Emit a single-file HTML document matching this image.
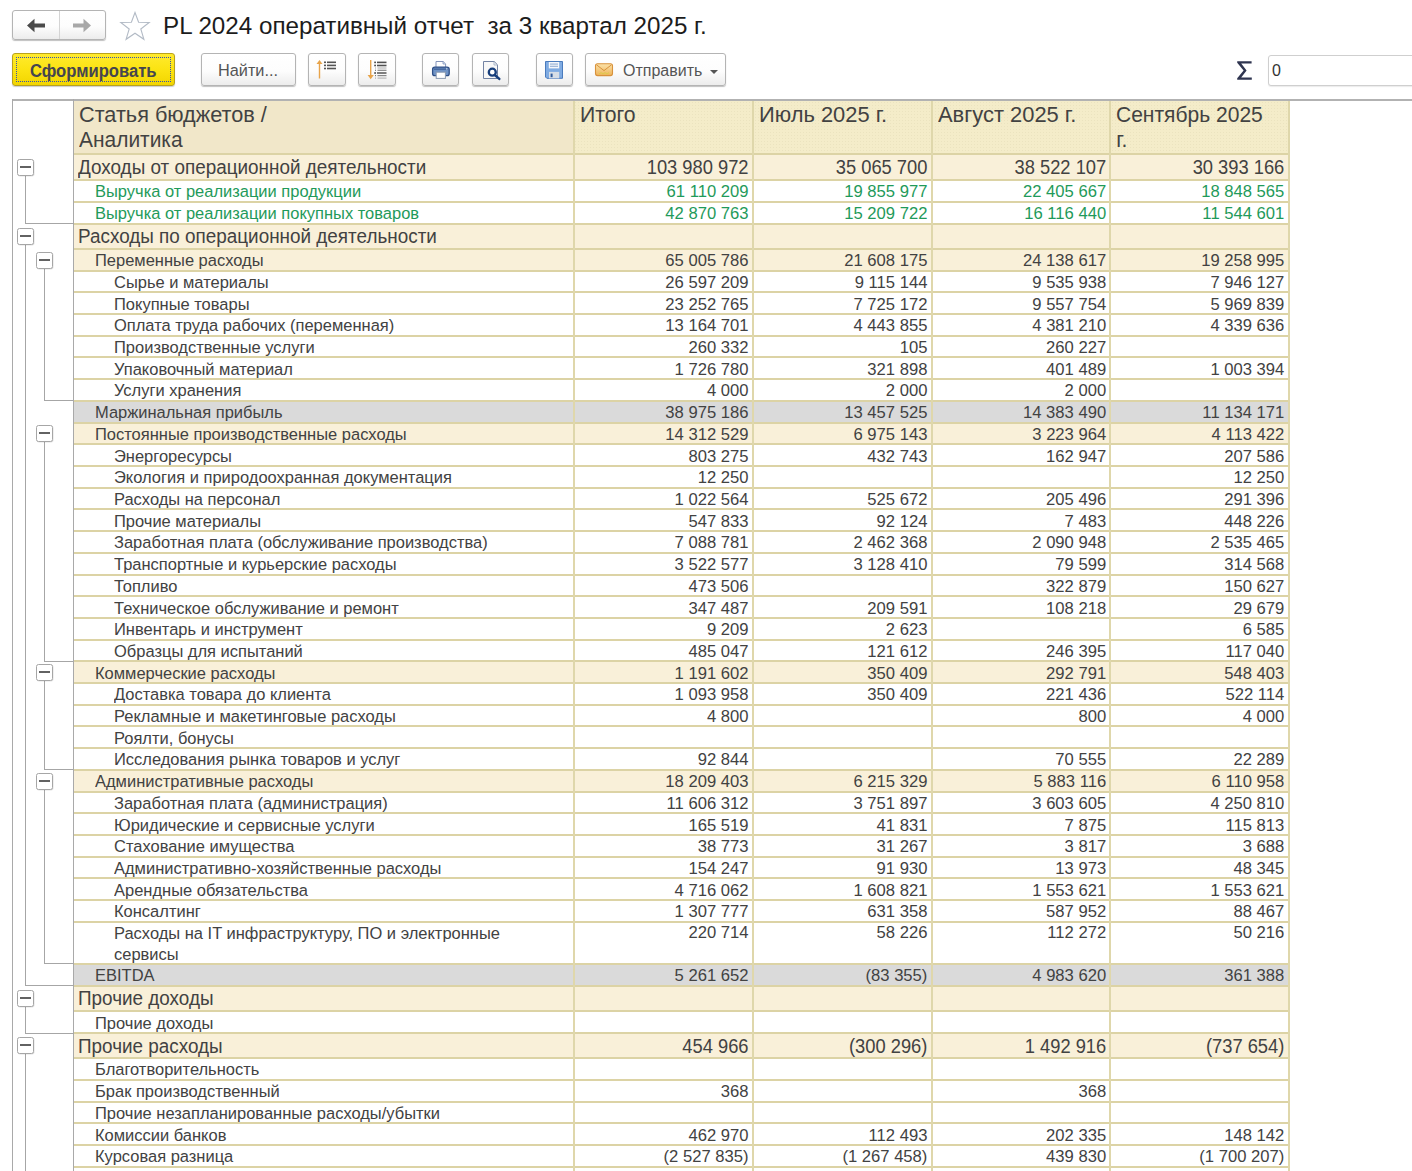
<!DOCTYPE html>
<html><head><meta charset="utf-8"><style>
*{margin:0;padding:0;box-sizing:border-box}
html,body{width:1412px;height:1171px;overflow:hidden;background:#fff}
body{position:relative;font-family:"Liberation Sans",sans-serif;color:#424242}
.a{position:absolute}
.t{position:absolute;white-space:nowrap;line-height:1}
.n{position:absolute;white-space:nowrap;line-height:1;text-align:right}
.hl{position:absolute;height:2px;background:#dcd3a5}
.vl{position:absolute;width:2px;background:#dfd7ab}
.btn{position:absolute;border:1px solid #b4b4b4;border-radius:3px;background:linear-gradient(#ffffff,#fdfdfd 55%,#ececec);box-shadow:0 1px 1px rgba(0,0,0,.25)}
.tg{position:absolute;background:#a6a6a6}
</style></head><body>

<div class="btn" style="left:12px;top:10px;width:94px;height:30px;"></div>
<div class="a" style="left:59px;top:11px;width:1px;height:28px;background:#d4d4d4"></div>
<svg class="a" style="left:26px;top:18px" width="20" height="15" viewBox="0 0 20 15"><path d="M1 7.5 L8.5 0.8 L8.5 5.6 L19 5.6 L19 9.4 L8.5 9.4 L8.5 14.2 Z" fill="#4a4a4a"/></svg>
<svg class="a" style="left:72px;top:18px" width="20" height="15" viewBox="0 0 20 15"><path d="M19 7.5 L11.5 0.8 L11.5 5.6 L1 5.6 L1 9.4 L11.5 9.4 L11.5 14.2 Z" fill="#a8a8a8"/></svg>
<svg class="a" style="left:119px;top:11px" width="32" height="30" viewBox="0 0 32 30"><path d="M16 1.5 L19.6 11.3 L30.2 11.5 L21.8 18 L24.9 28.3 L16 22.2 L7.1 28.3 L10.2 18 L1.8 11.5 L12.4 11.3 Z" fill="none" stroke="#b3bbc6" stroke-width="1.1" stroke-linejoin="miter"/></svg>
<div class="t" style="left:162.5px;top:13.8px;font-size:24.3px;color:#1c1c1c;transform:scaleX(0.9955);transform-origin:0 0">PL 2024 оперативный отчет&nbsp; за 3 квартал 2025 г.</div>
<div class="a" style="left:12px;top:53px;width:163px;height:33px;border:1px solid #b9a21a;border-radius:3px;background:linear-gradient(#ffea2e,#fbe312 50%,#f2d500);box-shadow:0 1px 1px rgba(0,0,0,.2)"></div>
<div class="a" style="left:16px;top:57px;width:155px;height:25px;border:1px dotted #3550b0"></div>
<div class="t" style="left:29.5px;top:62.5px;font-size:17.6px;font-weight:bold;color:#45454f;transform:scaleX(0.944);transform-origin:0 0">Сформировать</div>
<div class="btn" style="left:201px;top:53px;width:95px;height:33px"></div>
<div class="t" style="left:218px;top:62px;font-size:16.3px;color:#545454">Найти...</div>
<div class="btn" style="left:308px;top:53px;width:38px;height:33px"></div>
<div class="btn" style="left:358px;top:53px;width:38px;height:33px"></div>
<div class="btn" style="left:422px;top:53px;width:37px;height:33px"></div>
<div class="btn" style="left:472px;top:53px;width:37px;height:33px"></div>
<div class="btn" style="left:536px;top:53px;width:37px;height:33px"></div>
<svg class="a" style="left:314px;top:58px" width="26" height="22" viewBox="0 0 26 22"><path d="M5.5 2 L2.5 6 L4.8 6 L4.8 20.5 L6.2 20.5 L6.2 6 L8.5 6 Z" fill="#e8a44a"/><rect x="10" y="3.5" width="2" height="1.6" fill="#555"/><rect x="13" y="3.5" width="9" height="1.6" fill="#555"/><rect x="10" y="6.6" width="2" height="1.6" fill="#555"/><rect x="13" y="6.6" width="9" height="1.6" fill="#555"/><rect x="10" y="9.7" width="2" height="1.6" fill="#555"/><rect x="13" y="9.7" width="9" height="1.6" fill="#555"/></svg>
<svg class="a" style="left:364.8px;top:58px" width="26" height="24" viewBox="0 0 26 24"><path d="M5.7 21.2 L2.6 17 L5 17 L5 2 L6.4 2 L6.4 17 L8.8 17 Z" fill="#e8a44a"/><rect x="9.2" y="3.6" width="1.8" height="1.6" fill="#505050"/><rect x="12" y="3.6" width="9.5" height="1.6" fill="#505050"/><rect x="9.2" y="6.7" width="1.8" height="1.6" fill="#505050"/><rect x="12" y="6.7" width="9.5" height="1.6" fill="#505050"/><rect x="10" y="9.4" width="1" height="1.2" fill="#b0b0b0"/><rect x="12.5" y="9.4" width="9" height="1.2" fill="#b8b8b8"/><rect x="10" y="11.7" width="1" height="1.2" fill="#777"/><rect x="12.5" y="11.7" width="9" height="1.2" fill="#888"/><rect x="9.2" y="14.2" width="1.8" height="1.6" fill="#505050"/><rect x="12" y="14.2" width="9.5" height="1.6" fill="#606060"/><rect x="10" y="17" width="1" height="1.2" fill="#777"/><rect x="12.5" y="17" width="9" height="1.2" fill="#888"/><rect x="10" y="19.5" width="1" height="1.2" fill="#b0b0b0"/><rect x="12.5" y="19.5" width="9" height="1.2" fill="#b8b8b8"/></svg>
<div class="btn" style="left:585px;top:53px;width:141px;height:33px"></div>
<svg class="a" style="left:420px;top:50px" width="200" height="40" viewBox="420 50 200 40"><path d="M436 61.5 L443.2 61.5 L445.6 63.9 L445.6 67.5 L436 67.5 Z" fill="#fff" stroke="#8595ba" stroke-width="1"/><path d="M443 61.5 L443 64 L445.6 64" fill="#cfe0f0" stroke="#8595ba" stroke-width="0.8"/><rect x="432.6" y="67.2" width="16.6" height="8.4" rx="2.2" fill="#6f93c6" stroke="#2f5088" stroke-width="1.3"/><rect x="434" y="68.6" width="13.8" height="1" fill="#2f5088"/><rect x="446" y="68.4" width="1.4" height="1" fill="#e8f0f8"/><rect x="436.2" y="72.2" width="9.2" height="6.2" fill="#fff" stroke="#8a9ab0" stroke-width="1"/><path d="M483.5 61.5 L494.2 61.5 L497.5 64.8 L497.5 78.5 L483.5 78.5 Z" fill="#f8f8f8" stroke="#7383a3" stroke-width="1"/><path d="M494 61.5 L494 65 L497.5 65" fill="none" stroke="#9aaac0" stroke-width="0.8"/><circle cx="492.3" cy="72.2" r="3.5" fill="#fff" stroke="#173e7c" stroke-width="2.3"/><path d="M494.8 75 L499.3 78.9" stroke="#173e7c" stroke-width="2.5" stroke-linecap="round"/><path d="M545.5 61.5 L562.5 61.5 L562.5 78.3 L546.8 78.3 L545.5 77 Z" fill="#7fabe2" stroke="#4a7bbd" stroke-width="1"/><rect x="548.8" y="62" width="10.4" height="6.4" fill="#f4f7fb"/><rect x="550" y="63.6" width="8" height="0.9" fill="#7f9fcc"/><rect x="550" y="65.8" width="8" height="0.9" fill="#7f9fcc"/><rect x="549" y="71.9" width="10.2" height="6.4" fill="#d6dde6"/><rect x="550.6" y="73.6" width="2" height="3.6" fill="#2f5a9c"/><defs><linearGradient id="env" x1="0" y1="0" x2="0" y2="1"><stop offset="0" stop-color="#fbe2a8"/><stop offset="1" stop-color="#eeb35a"/></linearGradient></defs><rect x="595.5" y="63.8" width="17" height="11.8" rx="2" fill="url(#env)" stroke="#d8923c" stroke-width="1.1"/><path d="M596.5 64.8 L604 70.6 L611.5 64.8" fill="none" stroke="#d8923c" stroke-width="1"/><path d="M599 74 L601 72.6 L603 74 L605 72.6 L607 74 L609 72.6" fill="none" stroke="#d6d040" stroke-width="0.8"/></svg>
<div class="t" style="left:623px;top:62.5px;font-size:16px;color:#555">Отправить</div>
<svg class="a" style="left:709px;top:69px" width="10" height="6" viewBox="0 0 10 6"><path d="M1 1 L9 1 L5 5 Z" fill="#555"/></svg>
<svg class="a" style="left:1236px;top:60px" width="17" height="21" viewBox="0 0 17 21"><path d="M1.2 1.2 L15.6 1.2 L15.6 3.6 L5.2 3.6 L10.6 10.5 L5.2 17.4 L15.8 17.4 L15.8 19.8 L1.2 19.8 L1.2 18.2 L7.6 10.5 L1.2 2.8 Z" fill="#2f3550"/></svg>
<div class="a" style="left:1268px;top:55px;width:160px;height:31px;border:1px solid #cfcfcf;border-radius:3px;background:#fff;box-shadow:0 1px 1px rgba(0,0,0,.08)"></div>
<div class="t" style="left:1272px;top:62.5px;font-size:16px;color:#333">0</div>
<div class="a" style="left:12px;top:98.5px;width:1400px;height:2px;background:#b2b2b2"></div>
<div class="a" style="left:73.5px;top:100.5px;width:500.5px;height:53.9px;background:#f1e7c9"></div>
<div class="a" style="left:574.0px;top:100.5px;width:714.6px;height:53.9px;background:#f4ecc9 radial-gradient(circle,rgba(190,180,140,.16) 0.6px,transparent 0.9px) 0 0/3px 3px"></div>
<div class="t" style="left:79.0px;top:102.0px;font-size:21.2px;line-height:25px;transform:scaleX(1.023);transform-origin:0 0">Статья бюджетов /</div>
<div class="t" style="left:79.0px;top:127.0px;font-size:21.2px;line-height:25px;transform:scaleX(0.988);transform-origin:0 0">Аналитика</div>
<div class="t" style="left:580.0px;top:102.0px;font-size:21.2px;line-height:25px;transform:scaleX(1.000);transform-origin:0 0">Итого</div>
<div class="t" style="left:758.5px;top:102.0px;font-size:21.2px;line-height:25px;transform:scaleX(1.033);transform-origin:0 0">Июль 2025 г.</div>
<div class="t" style="left:937.5px;top:102.0px;font-size:21.2px;line-height:25px;transform:scaleX(1.034);transform-origin:0 0">Август 2025 г.</div>
<div class="t" style="left:1116.3px;top:102.0px;font-size:21.2px;line-height:25px;transform:scaleX(0.992);transform-origin:0 0">Сентябрь 2025</div>
<div class="t" style="left:1116.3px;top:127.0px;font-size:21.2px;line-height:25px;transform:scaleX(1.000);transform-origin:0 0">г.</div>
<div class="a" style="left:73.5px;top:154.4px;width:1215.1px;height:25.4px;background:#f9f0d9"></div>
<div class="t" style="left:77.6px;top:158.30px;font-size:19.40px;color:#424242;transform:scaleX(0.974);transform-origin:0 0">Доходы от операционной деятельности</div>
<div class="n" style="left:574.0px;width:174.5px;top:158.30px;font-size:19.40px;color:#424242;transform:scaleX(0.944);transform-origin:100% 0">103 980 972</div>
<div class="n" style="left:752.8px;width:174.4px;top:158.30px;font-size:19.40px;color:#424242;transform:scaleX(0.944);transform-origin:100% 0">35 065 700</div>
<div class="n" style="left:931.5px;width:174.2px;top:158.30px;font-size:19.40px;color:#424242;transform:scaleX(0.944);transform-origin:100% 0">38 522 107</div>
<div class="n" style="left:1110.0px;width:174.3px;top:158.30px;font-size:19.40px;color:#424242;transform:scaleX(0.944);transform-origin:100% 0">30 393 166</div>
<div class="t" style="left:95.2px;top:184.40px;font-size:16.80px;color:#1f9a5a;transform:scaleX(0.982);transform-origin:0 0">Выручка от реализации продукции</div>
<div class="n" style="left:574.0px;width:174.5px;top:184.40px;font-size:16.80px;color:#1f9a5a;transform:scaleX(0.990);transform-origin:100% 0">61 110 209</div>
<div class="n" style="left:752.8px;width:174.4px;top:184.40px;font-size:16.80px;color:#1f9a5a;transform:scaleX(0.990);transform-origin:100% 0">19 855 977</div>
<div class="n" style="left:931.5px;width:174.2px;top:184.40px;font-size:16.80px;color:#1f9a5a;transform:scaleX(0.990);transform-origin:100% 0">22 405 667</div>
<div class="n" style="left:1110.0px;width:174.3px;top:184.40px;font-size:16.80px;color:#1f9a5a;transform:scaleX(0.990);transform-origin:100% 0">18 848 565</div>
<div class="t" style="left:95.2px;top:206.10px;font-size:16.80px;color:#1f9a5a;transform:scaleX(0.982);transform-origin:0 0">Выручка от реализации покупных товаров</div>
<div class="n" style="left:574.0px;width:174.5px;top:206.10px;font-size:16.80px;color:#1f9a5a;transform:scaleX(0.990);transform-origin:100% 0">42 870 763</div>
<div class="n" style="left:752.8px;width:174.4px;top:206.10px;font-size:16.80px;color:#1f9a5a;transform:scaleX(0.990);transform-origin:100% 0">15 209 722</div>
<div class="n" style="left:931.5px;width:174.2px;top:206.10px;font-size:16.80px;color:#1f9a5a;transform:scaleX(0.990);transform-origin:100% 0">16 116 440</div>
<div class="n" style="left:1110.0px;width:174.3px;top:206.10px;font-size:16.80px;color:#1f9a5a;transform:scaleX(0.990);transform-origin:100% 0">11 544 601</div>
<div class="a" style="left:73.5px;top:223.5px;width:1215.1px;height:25.4px;background:#f9f0d9"></div>
<div class="t" style="left:77.6px;top:227.40px;font-size:19.40px;color:#424242;transform:scaleX(0.974);transform-origin:0 0">Расходы по операционной деятельности</div>
<div class="a" style="left:73.5px;top:248.9px;width:1215.1px;height:21.7px;background:#f9f0d9"></div>
<div class="t" style="left:95.2px;top:253.21px;font-size:16.80px;color:#424242;transform:scaleX(0.982);transform-origin:0 0">Переменные расходы</div>
<div class="n" style="left:574.0px;width:174.5px;top:253.21px;font-size:16.80px;color:#424242;transform:scaleX(0.990);transform-origin:100% 0">65 005 786</div>
<div class="n" style="left:752.8px;width:174.4px;top:253.21px;font-size:16.80px;color:#424242;transform:scaleX(0.990);transform-origin:100% 0">21 608 175</div>
<div class="n" style="left:931.5px;width:174.2px;top:253.21px;font-size:16.80px;color:#424242;transform:scaleX(0.990);transform-origin:100% 0">24 138 617</div>
<div class="n" style="left:1110.0px;width:174.3px;top:253.21px;font-size:16.80px;color:#424242;transform:scaleX(0.990);transform-origin:100% 0">19 258 995</div>
<div class="t" style="left:113.8px;top:274.91px;font-size:16.80px;color:#424242;transform:scaleX(0.982);transform-origin:0 0">Сырье и материалы</div>
<div class="n" style="left:574.0px;width:174.5px;top:274.91px;font-size:16.80px;color:#424242;transform:scaleX(0.990);transform-origin:100% 0">26 597 209</div>
<div class="n" style="left:752.8px;width:174.4px;top:274.91px;font-size:16.80px;color:#424242;transform:scaleX(0.990);transform-origin:100% 0">9 115 144</div>
<div class="n" style="left:931.5px;width:174.2px;top:274.91px;font-size:16.80px;color:#424242;transform:scaleX(0.990);transform-origin:100% 0">9 535 938</div>
<div class="n" style="left:1110.0px;width:174.3px;top:274.91px;font-size:16.80px;color:#424242;transform:scaleX(0.990);transform-origin:100% 0">7 946 127</div>
<div class="t" style="left:113.8px;top:296.62px;font-size:16.80px;color:#424242;transform:scaleX(0.982);transform-origin:0 0">Покупные товары</div>
<div class="n" style="left:574.0px;width:174.5px;top:296.62px;font-size:16.80px;color:#424242;transform:scaleX(0.990);transform-origin:100% 0">23 252 765</div>
<div class="n" style="left:752.8px;width:174.4px;top:296.62px;font-size:16.80px;color:#424242;transform:scaleX(0.990);transform-origin:100% 0">7 725 172</div>
<div class="n" style="left:931.5px;width:174.2px;top:296.62px;font-size:16.80px;color:#424242;transform:scaleX(0.990);transform-origin:100% 0">9 557 754</div>
<div class="n" style="left:1110.0px;width:174.3px;top:296.62px;font-size:16.80px;color:#424242;transform:scaleX(0.990);transform-origin:100% 0">5 969 839</div>
<div class="t" style="left:113.8px;top:318.32px;font-size:16.80px;color:#424242;transform:scaleX(0.982);transform-origin:0 0">Оплата труда рабочих (переменная)</div>
<div class="n" style="left:574.0px;width:174.5px;top:318.32px;font-size:16.80px;color:#424242;transform:scaleX(0.990);transform-origin:100% 0">13 164 701</div>
<div class="n" style="left:752.8px;width:174.4px;top:318.32px;font-size:16.80px;color:#424242;transform:scaleX(0.990);transform-origin:100% 0">4 443 855</div>
<div class="n" style="left:931.5px;width:174.2px;top:318.32px;font-size:16.80px;color:#424242;transform:scaleX(0.990);transform-origin:100% 0">4 381 210</div>
<div class="n" style="left:1110.0px;width:174.3px;top:318.32px;font-size:16.80px;color:#424242;transform:scaleX(0.990);transform-origin:100% 0">4 339 636</div>
<div class="t" style="left:113.8px;top:340.03px;font-size:16.80px;color:#424242;transform:scaleX(0.982);transform-origin:0 0">Производственные услуги</div>
<div class="n" style="left:574.0px;width:174.5px;top:340.03px;font-size:16.80px;color:#424242;transform:scaleX(0.990);transform-origin:100% 0">260 332</div>
<div class="n" style="left:752.8px;width:174.4px;top:340.03px;font-size:16.80px;color:#424242;transform:scaleX(0.990);transform-origin:100% 0">105</div>
<div class="n" style="left:931.5px;width:174.2px;top:340.03px;font-size:16.80px;color:#424242;transform:scaleX(0.990);transform-origin:100% 0">260 227</div>
<div class="t" style="left:113.8px;top:361.74px;font-size:16.80px;color:#424242;transform:scaleX(0.982);transform-origin:0 0">Упаковочный материал</div>
<div class="n" style="left:574.0px;width:174.5px;top:361.74px;font-size:16.80px;color:#424242;transform:scaleX(0.990);transform-origin:100% 0">1 726 780</div>
<div class="n" style="left:752.8px;width:174.4px;top:361.74px;font-size:16.80px;color:#424242;transform:scaleX(0.990);transform-origin:100% 0">321 898</div>
<div class="n" style="left:931.5px;width:174.2px;top:361.74px;font-size:16.80px;color:#424242;transform:scaleX(0.990);transform-origin:100% 0">401 489</div>
<div class="n" style="left:1110.0px;width:174.3px;top:361.74px;font-size:16.80px;color:#424242;transform:scaleX(0.990);transform-origin:100% 0">1 003 394</div>
<div class="t" style="left:113.8px;top:383.44px;font-size:16.80px;color:#424242;transform:scaleX(0.982);transform-origin:0 0">Услуги хранения</div>
<div class="n" style="left:574.0px;width:174.5px;top:383.44px;font-size:16.80px;color:#424242;transform:scaleX(0.990);transform-origin:100% 0">4 000</div>
<div class="n" style="left:752.8px;width:174.4px;top:383.44px;font-size:16.80px;color:#424242;transform:scaleX(0.990);transform-origin:100% 0">2 000</div>
<div class="n" style="left:931.5px;width:174.2px;top:383.44px;font-size:16.80px;color:#424242;transform:scaleX(0.990);transform-origin:100% 0">2 000</div>
<div class="a" style="left:73.5px;top:400.8px;width:1215.1px;height:21.7px;background:#dadada"></div>
<div class="t" style="left:95.2px;top:405.15px;font-size:16.80px;color:#424242;transform:scaleX(0.982);transform-origin:0 0">Маржинальная прибыль</div>
<div class="n" style="left:574.0px;width:174.5px;top:405.15px;font-size:16.80px;color:#424242;transform:scaleX(0.990);transform-origin:100% 0">38 975 186</div>
<div class="n" style="left:752.8px;width:174.4px;top:405.15px;font-size:16.80px;color:#424242;transform:scaleX(0.990);transform-origin:100% 0">13 457 525</div>
<div class="n" style="left:931.5px;width:174.2px;top:405.15px;font-size:16.80px;color:#424242;transform:scaleX(0.990);transform-origin:100% 0">14 383 490</div>
<div class="n" style="left:1110.0px;width:174.3px;top:405.15px;font-size:16.80px;color:#424242;transform:scaleX(0.990);transform-origin:100% 0">11 134 171</div>
<div class="a" style="left:73.5px;top:422.5px;width:1215.1px;height:21.7px;background:#f9f0d9"></div>
<div class="t" style="left:95.2px;top:426.85px;font-size:16.80px;color:#424242;transform:scaleX(0.982);transform-origin:0 0">Постоянные производственные расходы</div>
<div class="n" style="left:574.0px;width:174.5px;top:426.85px;font-size:16.80px;color:#424242;transform:scaleX(0.990);transform-origin:100% 0">14 312 529</div>
<div class="n" style="left:752.8px;width:174.4px;top:426.85px;font-size:16.80px;color:#424242;transform:scaleX(0.990);transform-origin:100% 0">6 975 143</div>
<div class="n" style="left:931.5px;width:174.2px;top:426.85px;font-size:16.80px;color:#424242;transform:scaleX(0.990);transform-origin:100% 0">3 223 964</div>
<div class="n" style="left:1110.0px;width:174.3px;top:426.85px;font-size:16.80px;color:#424242;transform:scaleX(0.990);transform-origin:100% 0">4 113 422</div>
<div class="t" style="left:113.8px;top:448.56px;font-size:16.80px;color:#424242;transform:scaleX(0.982);transform-origin:0 0">Энергоресурсы</div>
<div class="n" style="left:574.0px;width:174.5px;top:448.56px;font-size:16.80px;color:#424242;transform:scaleX(0.990);transform-origin:100% 0">803 275</div>
<div class="n" style="left:752.8px;width:174.4px;top:448.56px;font-size:16.80px;color:#424242;transform:scaleX(0.990);transform-origin:100% 0">432 743</div>
<div class="n" style="left:931.5px;width:174.2px;top:448.56px;font-size:16.80px;color:#424242;transform:scaleX(0.990);transform-origin:100% 0">162 947</div>
<div class="n" style="left:1110.0px;width:174.3px;top:448.56px;font-size:16.80px;color:#424242;transform:scaleX(0.990);transform-origin:100% 0">207 586</div>
<div class="t" style="left:113.8px;top:470.27px;font-size:16.80px;color:#424242;transform:scaleX(0.982);transform-origin:0 0">Экология и природоохранная документация</div>
<div class="n" style="left:574.0px;width:174.5px;top:470.27px;font-size:16.80px;color:#424242;transform:scaleX(0.990);transform-origin:100% 0">12 250</div>
<div class="n" style="left:1110.0px;width:174.3px;top:470.27px;font-size:16.80px;color:#424242;transform:scaleX(0.990);transform-origin:100% 0">12 250</div>
<div class="t" style="left:113.8px;top:491.97px;font-size:16.80px;color:#424242;transform:scaleX(0.982);transform-origin:0 0">Расходы на персонал</div>
<div class="n" style="left:574.0px;width:174.5px;top:491.97px;font-size:16.80px;color:#424242;transform:scaleX(0.990);transform-origin:100% 0">1 022 564</div>
<div class="n" style="left:752.8px;width:174.4px;top:491.97px;font-size:16.80px;color:#424242;transform:scaleX(0.990);transform-origin:100% 0">525 672</div>
<div class="n" style="left:931.5px;width:174.2px;top:491.97px;font-size:16.80px;color:#424242;transform:scaleX(0.990);transform-origin:100% 0">205 496</div>
<div class="n" style="left:1110.0px;width:174.3px;top:491.97px;font-size:16.80px;color:#424242;transform:scaleX(0.990);transform-origin:100% 0">291 396</div>
<div class="t" style="left:113.8px;top:513.68px;font-size:16.80px;color:#424242;transform:scaleX(0.982);transform-origin:0 0">Прочие материалы</div>
<div class="n" style="left:574.0px;width:174.5px;top:513.68px;font-size:16.80px;color:#424242;transform:scaleX(0.990);transform-origin:100% 0">547 833</div>
<div class="n" style="left:752.8px;width:174.4px;top:513.68px;font-size:16.80px;color:#424242;transform:scaleX(0.990);transform-origin:100% 0">92 124</div>
<div class="n" style="left:931.5px;width:174.2px;top:513.68px;font-size:16.80px;color:#424242;transform:scaleX(0.990);transform-origin:100% 0">7 483</div>
<div class="n" style="left:1110.0px;width:174.3px;top:513.68px;font-size:16.80px;color:#424242;transform:scaleX(0.990);transform-origin:100% 0">448 226</div>
<div class="t" style="left:113.8px;top:535.38px;font-size:16.80px;color:#424242;transform:scaleX(0.982);transform-origin:0 0">Заработная плата (обслуживание производства)</div>
<div class="n" style="left:574.0px;width:174.5px;top:535.38px;font-size:16.80px;color:#424242;transform:scaleX(0.990);transform-origin:100% 0">7 088 781</div>
<div class="n" style="left:752.8px;width:174.4px;top:535.38px;font-size:16.80px;color:#424242;transform:scaleX(0.990);transform-origin:100% 0">2 462 368</div>
<div class="n" style="left:931.5px;width:174.2px;top:535.38px;font-size:16.80px;color:#424242;transform:scaleX(0.990);transform-origin:100% 0">2 090 948</div>
<div class="n" style="left:1110.0px;width:174.3px;top:535.38px;font-size:16.80px;color:#424242;transform:scaleX(0.990);transform-origin:100% 0">2 535 465</div>
<div class="t" style="left:113.8px;top:557.09px;font-size:16.80px;color:#424242;transform:scaleX(0.982);transform-origin:0 0">Транспортные и курьерские расходы</div>
<div class="n" style="left:574.0px;width:174.5px;top:557.09px;font-size:16.80px;color:#424242;transform:scaleX(0.990);transform-origin:100% 0">3 522 577</div>
<div class="n" style="left:752.8px;width:174.4px;top:557.09px;font-size:16.80px;color:#424242;transform:scaleX(0.990);transform-origin:100% 0">3 128 410</div>
<div class="n" style="left:931.5px;width:174.2px;top:557.09px;font-size:16.80px;color:#424242;transform:scaleX(0.990);transform-origin:100% 0">79 599</div>
<div class="n" style="left:1110.0px;width:174.3px;top:557.09px;font-size:16.80px;color:#424242;transform:scaleX(0.990);transform-origin:100% 0">314 568</div>
<div class="t" style="left:113.8px;top:578.80px;font-size:16.80px;color:#424242;transform:scaleX(0.982);transform-origin:0 0">Топливо</div>
<div class="n" style="left:574.0px;width:174.5px;top:578.80px;font-size:16.80px;color:#424242;transform:scaleX(0.990);transform-origin:100% 0">473 506</div>
<div class="n" style="left:931.5px;width:174.2px;top:578.80px;font-size:16.80px;color:#424242;transform:scaleX(0.990);transform-origin:100% 0">322 879</div>
<div class="n" style="left:1110.0px;width:174.3px;top:578.80px;font-size:16.80px;color:#424242;transform:scaleX(0.990);transform-origin:100% 0">150 627</div>
<div class="t" style="left:113.8px;top:600.50px;font-size:16.80px;color:#424242;transform:scaleX(0.982);transform-origin:0 0">Техническое обслуживание и ремонт</div>
<div class="n" style="left:574.0px;width:174.5px;top:600.50px;font-size:16.80px;color:#424242;transform:scaleX(0.990);transform-origin:100% 0">347 487</div>
<div class="n" style="left:752.8px;width:174.4px;top:600.50px;font-size:16.80px;color:#424242;transform:scaleX(0.990);transform-origin:100% 0">209 591</div>
<div class="n" style="left:931.5px;width:174.2px;top:600.50px;font-size:16.80px;color:#424242;transform:scaleX(0.990);transform-origin:100% 0">108 218</div>
<div class="n" style="left:1110.0px;width:174.3px;top:600.50px;font-size:16.80px;color:#424242;transform:scaleX(0.990);transform-origin:100% 0">29 679</div>
<div class="t" style="left:113.8px;top:622.21px;font-size:16.80px;color:#424242;transform:scaleX(0.982);transform-origin:0 0">Инвентарь и инструмент</div>
<div class="n" style="left:574.0px;width:174.5px;top:622.21px;font-size:16.80px;color:#424242;transform:scaleX(0.990);transform-origin:100% 0">9 209</div>
<div class="n" style="left:752.8px;width:174.4px;top:622.21px;font-size:16.80px;color:#424242;transform:scaleX(0.990);transform-origin:100% 0">2 623</div>
<div class="n" style="left:1110.0px;width:174.3px;top:622.21px;font-size:16.80px;color:#424242;transform:scaleX(0.990);transform-origin:100% 0">6 585</div>
<div class="t" style="left:113.8px;top:643.91px;font-size:16.80px;color:#424242;transform:scaleX(0.982);transform-origin:0 0">Образцы для испытаний</div>
<div class="n" style="left:574.0px;width:174.5px;top:643.91px;font-size:16.80px;color:#424242;transform:scaleX(0.990);transform-origin:100% 0">485 047</div>
<div class="n" style="left:752.8px;width:174.4px;top:643.91px;font-size:16.80px;color:#424242;transform:scaleX(0.990);transform-origin:100% 0">121 612</div>
<div class="n" style="left:931.5px;width:174.2px;top:643.91px;font-size:16.80px;color:#424242;transform:scaleX(0.990);transform-origin:100% 0">246 395</div>
<div class="n" style="left:1110.0px;width:174.3px;top:643.91px;font-size:16.80px;color:#424242;transform:scaleX(0.990);transform-origin:100% 0">117 040</div>
<div class="a" style="left:73.5px;top:661.3px;width:1215.1px;height:21.7px;background:#f9f0d9"></div>
<div class="t" style="left:95.2px;top:665.62px;font-size:16.80px;color:#424242;transform:scaleX(0.982);transform-origin:0 0">Коммерческие расходы</div>
<div class="n" style="left:574.0px;width:174.5px;top:665.62px;font-size:16.80px;color:#424242;transform:scaleX(0.990);transform-origin:100% 0">1 191 602</div>
<div class="n" style="left:752.8px;width:174.4px;top:665.62px;font-size:16.80px;color:#424242;transform:scaleX(0.990);transform-origin:100% 0">350 409</div>
<div class="n" style="left:931.5px;width:174.2px;top:665.62px;font-size:16.80px;color:#424242;transform:scaleX(0.990);transform-origin:100% 0">292 791</div>
<div class="n" style="left:1110.0px;width:174.3px;top:665.62px;font-size:16.80px;color:#424242;transform:scaleX(0.990);transform-origin:100% 0">548 403</div>
<div class="t" style="left:113.8px;top:687.33px;font-size:16.80px;color:#424242;transform:scaleX(0.982);transform-origin:0 0">Доставка товара до клиента</div>
<div class="n" style="left:574.0px;width:174.5px;top:687.33px;font-size:16.80px;color:#424242;transform:scaleX(0.990);transform-origin:100% 0">1 093 958</div>
<div class="n" style="left:752.8px;width:174.4px;top:687.33px;font-size:16.80px;color:#424242;transform:scaleX(0.990);transform-origin:100% 0">350 409</div>
<div class="n" style="left:931.5px;width:174.2px;top:687.33px;font-size:16.80px;color:#424242;transform:scaleX(0.990);transform-origin:100% 0">221 436</div>
<div class="n" style="left:1110.0px;width:174.3px;top:687.33px;font-size:16.80px;color:#424242;transform:scaleX(0.990);transform-origin:100% 0">522 114</div>
<div class="t" style="left:113.8px;top:709.03px;font-size:16.80px;color:#424242;transform:scaleX(0.982);transform-origin:0 0">Рекламные и макетинговые расходы</div>
<div class="n" style="left:574.0px;width:174.5px;top:709.03px;font-size:16.80px;color:#424242;transform:scaleX(0.990);transform-origin:100% 0">4 800</div>
<div class="n" style="left:931.5px;width:174.2px;top:709.03px;font-size:16.80px;color:#424242;transform:scaleX(0.990);transform-origin:100% 0">800</div>
<div class="n" style="left:1110.0px;width:174.3px;top:709.03px;font-size:16.80px;color:#424242;transform:scaleX(0.990);transform-origin:100% 0">4 000</div>
<div class="t" style="left:113.8px;top:730.74px;font-size:16.80px;color:#424242;transform:scaleX(0.982);transform-origin:0 0">Роялти, бонусы</div>
<div class="t" style="left:113.8px;top:752.44px;font-size:16.80px;color:#424242;transform:scaleX(0.982);transform-origin:0 0">Исследования рынка товаров и услуг</div>
<div class="n" style="left:574.0px;width:174.5px;top:752.44px;font-size:16.80px;color:#424242;transform:scaleX(0.990);transform-origin:100% 0">92 844</div>
<div class="n" style="left:931.5px;width:174.2px;top:752.44px;font-size:16.80px;color:#424242;transform:scaleX(0.990);transform-origin:100% 0">70 555</div>
<div class="n" style="left:1110.0px;width:174.3px;top:752.44px;font-size:16.80px;color:#424242;transform:scaleX(0.990);transform-origin:100% 0">22 289</div>
<div class="a" style="left:73.5px;top:769.8px;width:1215.1px;height:21.7px;background:#f9f0d9"></div>
<div class="t" style="left:95.2px;top:774.15px;font-size:16.80px;color:#424242;transform:scaleX(0.982);transform-origin:0 0">Административные расходы</div>
<div class="n" style="left:574.0px;width:174.5px;top:774.15px;font-size:16.80px;color:#424242;transform:scaleX(0.990);transform-origin:100% 0">18 209 403</div>
<div class="n" style="left:752.8px;width:174.4px;top:774.15px;font-size:16.80px;color:#424242;transform:scaleX(0.990);transform-origin:100% 0">6 215 329</div>
<div class="n" style="left:931.5px;width:174.2px;top:774.15px;font-size:16.80px;color:#424242;transform:scaleX(0.990);transform-origin:100% 0">5 883 116</div>
<div class="n" style="left:1110.0px;width:174.3px;top:774.15px;font-size:16.80px;color:#424242;transform:scaleX(0.990);transform-origin:100% 0">6 110 958</div>
<div class="t" style="left:113.8px;top:795.86px;font-size:16.80px;color:#424242;transform:scaleX(0.982);transform-origin:0 0">Заработная плата (администрация)</div>
<div class="n" style="left:574.0px;width:174.5px;top:795.86px;font-size:16.80px;color:#424242;transform:scaleX(0.990);transform-origin:100% 0">11 606 312</div>
<div class="n" style="left:752.8px;width:174.4px;top:795.86px;font-size:16.80px;color:#424242;transform:scaleX(0.990);transform-origin:100% 0">3 751 897</div>
<div class="n" style="left:931.5px;width:174.2px;top:795.86px;font-size:16.80px;color:#424242;transform:scaleX(0.990);transform-origin:100% 0">3 603 605</div>
<div class="n" style="left:1110.0px;width:174.3px;top:795.86px;font-size:16.80px;color:#424242;transform:scaleX(0.990);transform-origin:100% 0">4 250 810</div>
<div class="t" style="left:113.8px;top:817.56px;font-size:16.80px;color:#424242;transform:scaleX(0.982);transform-origin:0 0">Юридические и сервисные услуги</div>
<div class="n" style="left:574.0px;width:174.5px;top:817.56px;font-size:16.80px;color:#424242;transform:scaleX(0.990);transform-origin:100% 0">165 519</div>
<div class="n" style="left:752.8px;width:174.4px;top:817.56px;font-size:16.80px;color:#424242;transform:scaleX(0.990);transform-origin:100% 0">41 831</div>
<div class="n" style="left:931.5px;width:174.2px;top:817.56px;font-size:16.80px;color:#424242;transform:scaleX(0.990);transform-origin:100% 0">7 875</div>
<div class="n" style="left:1110.0px;width:174.3px;top:817.56px;font-size:16.80px;color:#424242;transform:scaleX(0.990);transform-origin:100% 0">115 813</div>
<div class="t" style="left:113.8px;top:839.27px;font-size:16.80px;color:#424242;transform:scaleX(0.982);transform-origin:0 0">Стахование имущества</div>
<div class="n" style="left:574.0px;width:174.5px;top:839.27px;font-size:16.80px;color:#424242;transform:scaleX(0.990);transform-origin:100% 0">38 773</div>
<div class="n" style="left:752.8px;width:174.4px;top:839.27px;font-size:16.80px;color:#424242;transform:scaleX(0.990);transform-origin:100% 0">31 267</div>
<div class="n" style="left:931.5px;width:174.2px;top:839.27px;font-size:16.80px;color:#424242;transform:scaleX(0.990);transform-origin:100% 0">3 817</div>
<div class="n" style="left:1110.0px;width:174.3px;top:839.27px;font-size:16.80px;color:#424242;transform:scaleX(0.990);transform-origin:100% 0">3 688</div>
<div class="t" style="left:113.8px;top:860.97px;font-size:16.80px;color:#424242;transform:scaleX(0.982);transform-origin:0 0">Административно-хозяйственные расходы</div>
<div class="n" style="left:574.0px;width:174.5px;top:860.97px;font-size:16.80px;color:#424242;transform:scaleX(0.990);transform-origin:100% 0">154 247</div>
<div class="n" style="left:752.8px;width:174.4px;top:860.97px;font-size:16.80px;color:#424242;transform:scaleX(0.990);transform-origin:100% 0">91 930</div>
<div class="n" style="left:931.5px;width:174.2px;top:860.97px;font-size:16.80px;color:#424242;transform:scaleX(0.990);transform-origin:100% 0">13 973</div>
<div class="n" style="left:1110.0px;width:174.3px;top:860.97px;font-size:16.80px;color:#424242;transform:scaleX(0.990);transform-origin:100% 0">48 345</div>
<div class="t" style="left:113.8px;top:882.68px;font-size:16.80px;color:#424242;transform:scaleX(0.982);transform-origin:0 0">Арендные обязательства</div>
<div class="n" style="left:574.0px;width:174.5px;top:882.68px;font-size:16.80px;color:#424242;transform:scaleX(0.990);transform-origin:100% 0">4 716 062</div>
<div class="n" style="left:752.8px;width:174.4px;top:882.68px;font-size:16.80px;color:#424242;transform:scaleX(0.990);transform-origin:100% 0">1 608 821</div>
<div class="n" style="left:931.5px;width:174.2px;top:882.68px;font-size:16.80px;color:#424242;transform:scaleX(0.990);transform-origin:100% 0">1 553 621</div>
<div class="n" style="left:1110.0px;width:174.3px;top:882.68px;font-size:16.80px;color:#424242;transform:scaleX(0.990);transform-origin:100% 0">1 553 621</div>
<div class="t" style="left:113.8px;top:904.39px;font-size:16.80px;color:#424242;transform:scaleX(0.982);transform-origin:0 0">Консалтинг</div>
<div class="n" style="left:574.0px;width:174.5px;top:904.39px;font-size:16.80px;color:#424242;transform:scaleX(0.990);transform-origin:100% 0">1 307 777</div>
<div class="n" style="left:752.8px;width:174.4px;top:904.39px;font-size:16.80px;color:#424242;transform:scaleX(0.990);transform-origin:100% 0">631 358</div>
<div class="n" style="left:931.5px;width:174.2px;top:904.39px;font-size:16.80px;color:#424242;transform:scaleX(0.990);transform-origin:100% 0">587 952</div>
<div class="n" style="left:1110.0px;width:174.3px;top:904.39px;font-size:16.80px;color:#424242;transform:scaleX(0.990);transform-origin:100% 0">88 467</div>
<div class="t" style="left:113.8px;top:923.19px;font-size:16.80px;color:#424242;line-height:21px;transform:scaleX(0.982);transform-origin:0 0">Расходы на IT инфраструктуру, ПО и электронные<br>сервисы</div>
<div class="n" style="left:574.0px;width:174.5px;top:925.29px;font-size:16.80px;color:#424242;transform:scaleX(0.990);transform-origin:100% 0">220 714</div>
<div class="n" style="left:752.8px;width:174.4px;top:925.29px;font-size:16.80px;color:#424242;transform:scaleX(0.990);transform-origin:100% 0">58 226</div>
<div class="n" style="left:931.5px;width:174.2px;top:925.29px;font-size:16.80px;color:#424242;transform:scaleX(0.990);transform-origin:100% 0">112 272</div>
<div class="n" style="left:1110.0px;width:174.3px;top:925.29px;font-size:16.80px;color:#424242;transform:scaleX(0.990);transform-origin:100% 0">50 216</div>
<div class="a" style="left:73.5px;top:963.8px;width:1215.1px;height:21.9px;background:#dadada"></div>
<div class="t" style="left:95.2px;top:968.30px;font-size:16.80px;color:#424242;transform:scaleX(0.982);transform-origin:0 0">EBITDA</div>
<div class="n" style="left:574.0px;width:174.5px;top:968.30px;font-size:16.80px;color:#424242;transform:scaleX(0.990);transform-origin:100% 0">5 261 652</div>
<div class="n" style="left:752.8px;width:174.4px;top:968.30px;font-size:16.80px;color:#424242;transform:scaleX(0.990);transform-origin:100% 0">(83 355)</div>
<div class="n" style="left:931.5px;width:174.2px;top:968.30px;font-size:16.80px;color:#424242;transform:scaleX(0.990);transform-origin:100% 0">4 983 620</div>
<div class="n" style="left:1110.0px;width:174.3px;top:968.30px;font-size:16.80px;color:#424242;transform:scaleX(0.990);transform-origin:100% 0">361 388</div>
<div class="a" style="left:73.5px;top:985.7px;width:1215.1px;height:25.2px;background:#f9f0d9"></div>
<div class="t" style="left:77.6px;top:989.40px;font-size:19.40px;color:#424242;transform:scaleX(0.974);transform-origin:0 0">Прочие доходы</div>
<div class="t" style="left:95.2px;top:1015.70px;font-size:16.80px;color:#424242;transform:scaleX(0.982);transform-origin:0 0">Прочие доходы</div>
<div class="a" style="left:73.5px;top:1033.1px;width:1215.1px;height:25.0px;background:#f9f0d9"></div>
<div class="t" style="left:77.6px;top:1036.60px;font-size:19.40px;color:#424242;transform:scaleX(0.974);transform-origin:0 0">Прочие расходы</div>
<div class="n" style="left:574.0px;width:174.5px;top:1036.60px;font-size:19.40px;color:#424242;transform:scaleX(0.944);transform-origin:100% 0">454 966</div>
<div class="n" style="left:752.8px;width:174.4px;top:1036.60px;font-size:19.40px;color:#424242;transform:scaleX(0.944);transform-origin:100% 0">(300 296)</div>
<div class="n" style="left:931.5px;width:174.2px;top:1036.60px;font-size:19.40px;color:#424242;transform:scaleX(0.944);transform-origin:100% 0">1 492 916</div>
<div class="n" style="left:1110.0px;width:174.3px;top:1036.60px;font-size:19.40px;color:#424242;transform:scaleX(0.944);transform-origin:100% 0">(737 654)</div>
<div class="t" style="left:95.2px;top:1062.42px;font-size:16.80px;color:#424242;transform:scaleX(0.982);transform-origin:0 0">Благотворительность</div>
<div class="t" style="left:95.2px;top:1084.14px;font-size:16.80px;color:#424242;transform:scaleX(0.982);transform-origin:0 0">Брак производственный</div>
<div class="n" style="left:574.0px;width:174.5px;top:1084.14px;font-size:16.80px;color:#424242;transform:scaleX(0.990);transform-origin:100% 0">368</div>
<div class="n" style="left:931.5px;width:174.2px;top:1084.14px;font-size:16.80px;color:#424242;transform:scaleX(0.990);transform-origin:100% 0">368</div>
<div class="t" style="left:95.2px;top:1105.86px;font-size:16.80px;color:#424242;transform:scaleX(0.982);transform-origin:0 0">Прочие незапланированные расходы/убытки</div>
<div class="t" style="left:95.2px;top:1127.58px;font-size:16.80px;color:#424242;transform:scaleX(0.982);transform-origin:0 0">Комиссии банков</div>
<div class="n" style="left:574.0px;width:174.5px;top:1127.58px;font-size:16.80px;color:#424242;transform:scaleX(0.990);transform-origin:100% 0">462 970</div>
<div class="n" style="left:752.8px;width:174.4px;top:1127.58px;font-size:16.80px;color:#424242;transform:scaleX(0.990);transform-origin:100% 0">112 493</div>
<div class="n" style="left:931.5px;width:174.2px;top:1127.58px;font-size:16.80px;color:#424242;transform:scaleX(0.990);transform-origin:100% 0">202 335</div>
<div class="n" style="left:1110.0px;width:174.3px;top:1127.58px;font-size:16.80px;color:#424242;transform:scaleX(0.990);transform-origin:100% 0">148 142</div>
<div class="t" style="left:95.2px;top:1149.30px;font-size:16.80px;color:#424242;transform:scaleX(0.982);transform-origin:0 0">Курсовая разница</div>
<div class="n" style="left:574.0px;width:174.5px;top:1149.30px;font-size:16.80px;color:#424242;transform:scaleX(0.990);transform-origin:100% 0">(2 527 835)</div>
<div class="n" style="left:752.8px;width:174.4px;top:1149.30px;font-size:16.80px;color:#424242;transform:scaleX(0.990);transform-origin:100% 0">(1 267 458)</div>
<div class="n" style="left:931.5px;width:174.2px;top:1149.30px;font-size:16.80px;color:#424242;transform:scaleX(0.990);transform-origin:100% 0">439 830</div>
<div class="n" style="left:1110.0px;width:174.3px;top:1149.30px;font-size:16.80px;color:#424242;transform:scaleX(0.990);transform-origin:100% 0">(1 700 207)</div>
<div class="hl" style="left:73.5px;top:153.4px;width:1216.1px"></div>
<div class="hl" style="left:73.5px;top:178.8px;width:1216.1px"></div>
<div class="hl" style="left:73.5px;top:200.8px;width:1216.1px"></div>
<div class="hl" style="left:73.5px;top:222.5px;width:1216.1px"></div>
<div class="hl" style="left:73.5px;top:247.9px;width:1216.1px"></div>
<div class="hl" style="left:73.5px;top:269.6px;width:1216.1px"></div>
<div class="hl" style="left:73.5px;top:291.3px;width:1216.1px"></div>
<div class="hl" style="left:73.5px;top:313.0px;width:1216.1px"></div>
<div class="hl" style="left:73.5px;top:334.7px;width:1216.1px"></div>
<div class="hl" style="left:73.5px;top:356.4px;width:1216.1px"></div>
<div class="hl" style="left:73.5px;top:378.1px;width:1216.1px"></div>
<div class="hl" style="left:73.5px;top:399.8px;width:1216.1px"></div>
<div class="hl" style="left:73.5px;top:421.5px;width:1216.1px"></div>
<div class="hl" style="left:73.5px;top:443.3px;width:1216.1px"></div>
<div class="hl" style="left:73.5px;top:465.0px;width:1216.1px"></div>
<div class="hl" style="left:73.5px;top:486.7px;width:1216.1px"></div>
<div class="hl" style="left:73.5px;top:508.4px;width:1216.1px"></div>
<div class="hl" style="left:73.5px;top:530.1px;width:1216.1px"></div>
<div class="hl" style="left:73.5px;top:551.8px;width:1216.1px"></div>
<div class="hl" style="left:73.5px;top:573.5px;width:1216.1px"></div>
<div class="hl" style="left:73.5px;top:595.2px;width:1216.1px"></div>
<div class="hl" style="left:73.5px;top:616.9px;width:1216.1px"></div>
<div class="hl" style="left:73.5px;top:638.6px;width:1216.1px"></div>
<div class="hl" style="left:73.5px;top:660.3px;width:1216.1px"></div>
<div class="hl" style="left:73.5px;top:682.0px;width:1216.1px"></div>
<div class="hl" style="left:73.5px;top:703.7px;width:1216.1px"></div>
<div class="hl" style="left:73.5px;top:725.4px;width:1216.1px"></div>
<div class="hl" style="left:73.5px;top:747.1px;width:1216.1px"></div>
<div class="hl" style="left:73.5px;top:768.8px;width:1216.1px"></div>
<div class="hl" style="left:73.5px;top:790.5px;width:1216.1px"></div>
<div class="hl" style="left:73.5px;top:812.3px;width:1216.1px"></div>
<div class="hl" style="left:73.5px;top:834.0px;width:1216.1px"></div>
<div class="hl" style="left:73.5px;top:855.7px;width:1216.1px"></div>
<div class="hl" style="left:73.5px;top:877.4px;width:1216.1px"></div>
<div class="hl" style="left:73.5px;top:899.1px;width:1216.1px"></div>
<div class="hl" style="left:73.5px;top:920.8px;width:1216.1px"></div>
<div class="hl" style="left:73.5px;top:962.8px;width:1216.1px"></div>
<div class="hl" style="left:73.5px;top:984.7px;width:1216.1px"></div>
<div class="hl" style="left:73.5px;top:1009.9px;width:1216.1px"></div>
<div class="hl" style="left:73.5px;top:1032.1px;width:1216.1px"></div>
<div class="hl" style="left:73.5px;top:1057.1px;width:1216.1px"></div>
<div class="hl" style="left:73.5px;top:1078.8px;width:1216.1px"></div>
<div class="hl" style="left:73.5px;top:1100.5px;width:1216.1px"></div>
<div class="hl" style="left:73.5px;top:1122.3px;width:1216.1px"></div>
<div class="hl" style="left:73.5px;top:1144.0px;width:1216.1px"></div>
<div class="hl" style="left:73.5px;top:1165.7px;width:1216.1px"></div>
<div class="vl" style="left:573.0px;top:100.5px;height:1071.5px"></div>
<div class="vl" style="left:751.8px;top:100.5px;height:1071.5px"></div>
<div class="vl" style="left:930.5px;top:100.5px;height:1071.5px"></div>
<div class="vl" style="left:1109.0px;top:100.5px;height:1071.5px"></div>
<div class="vl" style="left:1287.6px;top:100.5px;height:1071.5px"></div>
<div class="a" style="left:12px;top:99px;width:1.3px;height:1080px;background:#a9a9a9"></div>
<div class="a" style="left:73px;top:99px;width:1.3px;height:1080px;background:#a9a9a9"></div>
<div class="tg" style="left:24.5px;top:175.5px;width:1.3px;height:48.0px"></div>
<div class="tg" style="left:24.5px;top:222.9px;width:49.0px;height:1.3px"></div>
<div class="a" style="left:17px;top:159px;width:17px;height:17px;border:1px solid #a6a6a6;border-radius:2.5px;background:#fff;box-shadow:0.5px 0.5px 0 rgba(0,0,0,.12)"></div>
<div class="a" style="left:20px;top:166px;width:11px;height:2px;background:#626262"></div>
<div class="tg" style="left:24.5px;top:244.6px;width:1.3px;height:741.1px"></div>
<div class="tg" style="left:24.5px;top:985.1px;width:49.0px;height:1.3px"></div>
<div class="a" style="left:17px;top:228px;width:17px;height:17px;border:1px solid #a6a6a6;border-radius:2.5px;background:#fff;box-shadow:0.5px 0.5px 0 rgba(0,0,0,.12)"></div>
<div class="a" style="left:20px;top:235px;width:11px;height:2px;background:#626262"></div>
<div class="tg" style="left:43.7px;top:268.2px;width:1.3px;height:132.7px"></div>
<div class="tg" style="left:43.7px;top:400.2px;width:29.8px;height:1.3px"></div>
<div class="a" style="left:36px;top:252px;width:17px;height:17px;border:1px solid #a6a6a6;border-radius:2.5px;background:#fff;box-shadow:0.5px 0.5px 0 rgba(0,0,0,.12)"></div>
<div class="a" style="left:39px;top:259px;width:11px;height:2px;background:#626262"></div>
<div class="tg" style="left:43.7px;top:441.8px;width:1.3px;height:219.5px"></div>
<div class="tg" style="left:43.7px;top:660.7px;width:29.8px;height:1.3px"></div>
<div class="a" style="left:36px;top:425px;width:17px;height:17px;border:1px solid #a6a6a6;border-radius:2.5px;background:#fff;box-shadow:0.5px 0.5px 0 rgba(0,0,0,.12)"></div>
<div class="a" style="left:39px;top:432px;width:11px;height:2px;background:#626262"></div>
<div class="tg" style="left:43.7px;top:680.6px;width:1.3px;height:89.3px"></div>
<div class="tg" style="left:43.7px;top:769.2px;width:29.8px;height:1.3px"></div>
<div class="a" style="left:36px;top:664px;width:17px;height:17px;border:1px solid #a6a6a6;border-radius:2.5px;background:#fff;box-shadow:0.5px 0.5px 0 rgba(0,0,0,.12)"></div>
<div class="a" style="left:39px;top:671px;width:11px;height:2px;background:#626262"></div>
<div class="tg" style="left:43.7px;top:789.1px;width:1.3px;height:174.7px"></div>
<div class="tg" style="left:43.7px;top:963.2px;width:29.8px;height:1.3px"></div>
<div class="a" style="left:36px;top:773px;width:17px;height:17px;border:1px solid #a6a6a6;border-radius:2.5px;background:#fff;box-shadow:0.5px 0.5px 0 rgba(0,0,0,.12)"></div>
<div class="a" style="left:39px;top:780px;width:11px;height:2px;background:#626262"></div>
<div class="tg" style="left:24.5px;top:1006.7px;width:1.3px;height:26.4px"></div>
<div class="tg" style="left:24.5px;top:1032.5px;width:49.0px;height:1.3px"></div>
<div class="a" style="left:17px;top:990px;width:17px;height:17px;border:1px solid #a6a6a6;border-radius:2.5px;background:#fff;box-shadow:0.5px 0.5px 0 rgba(0,0,0,.12)"></div>
<div class="a" style="left:20px;top:997px;width:11px;height:2px;background:#626262"></div>
<div class="tg" style="left:24.5px;top:1053.6px;width:1.3px;height:121.4px"></div>
<div class="a" style="left:17px;top:1037px;width:17px;height:17px;border:1px solid #a6a6a6;border-radius:2.5px;background:#fff;box-shadow:0.5px 0.5px 0 rgba(0,0,0,.12)"></div>
<div class="a" style="left:20px;top:1044px;width:11px;height:2px;background:#626262"></div>
</body></html>
